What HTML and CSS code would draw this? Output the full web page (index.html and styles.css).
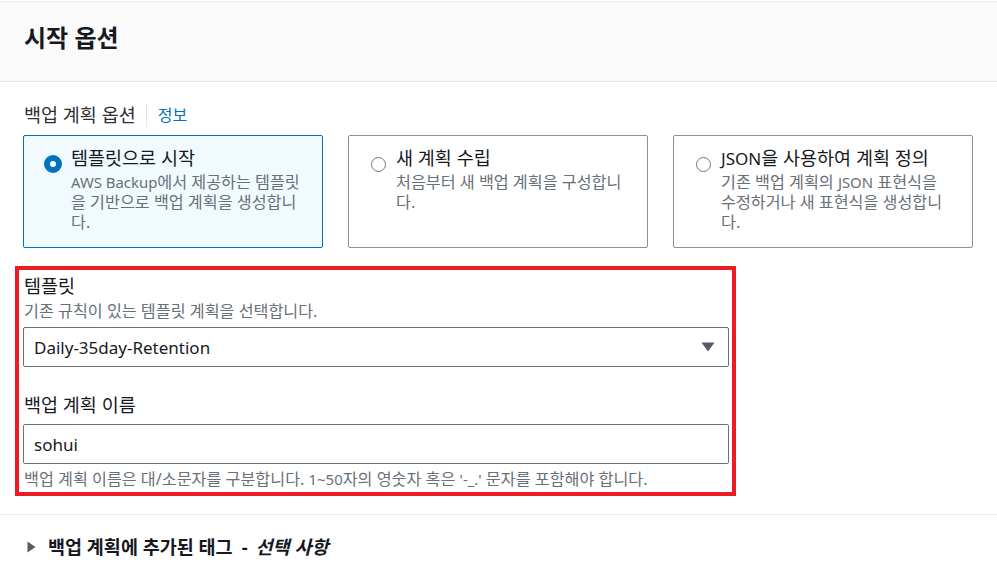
FILE: index.html
```html
<!DOCTYPE html>
<html lang="ko">
<head>
<meta charset="utf-8">
<title>시작 옵션</title>
<link rel="stylesheet" href="styles.css">
</head>
<body>
<div class="panel">
  <div class="panel-header">
    <h2 class="panel-title">시작 옵션</h2>
  </div>
  <div class="panel-body">
    <div class="group-label">
      <span>백업 계획 옵션</span>
      <span class="divider"></span>
      <a class="info-link">정보</a>
    </div>
    <div class="tiles">
      <div class="tile tile-selected">
        <span class="radio radio-checked"></span>
        <div class="tile-text">
          <div class="tile-title">템플릿으로 시작</div>
          <div class="tile-desc"><span class="lat">AWS Backup</span>에서 제공하는 템플릿을 기반으로 백업 계획을 생성합니다.</div>
        </div>
      </div>
      <div class="tile">
        <span class="radio"></span>
        <div class="tile-text">
          <div class="tile-title">새 계획 수립</div>
          <div class="tile-desc">처음부터 새 백업 계획을 구성합니다.</div>
        </div>
      </div>
      <div class="tile">
        <span class="radio"></span>
        <div class="tile-text">
          <div class="tile-title"><span class="lat">JSON</span>을 사용하여 계획 정의</div>
          <div class="tile-desc">기존 백업 계획의 <span class="lat">JSON</span> 표현식을 수정하거나 새 표현식을 생성합니다.</div>
        </div>
      </div>
    </div>
    <div class="fields">
      <div class="highlight"></div>
      <div class="field">
        <div class="field-label">템플릿</div>
        <div class="field-desc">기존 규칙이 있는 템플릿 계획을 선택합니다.</div>
        <div class="select">
          <span>Daily-35day-Retention</span>
          <svg class="caret" width="14" height="10" viewBox="0 0 14 10"><path d="M0.5 0.5 H13.5 L7 9.5 Z" fill="#545b64"/></svg>
        </div>
      </div>
      <div class="field field-name">
        <div class="field-label">백업 계획 이름</div>
        <div class="input">sohui</div>
        <div class="field-hint">백업 계획 이름은 대/소문자를 구분합니다. <span class="lat">1~50</span>자의 영숫자 혹은 <span class="lat">'-_.'</span> 문자를 포함해야 합니다.</div>
      </div>
    </div>
  </div>
  <div class="expander">
    <svg class="expander-icon" width="9" height="12" viewBox="0 0 9 12"><path d="M0.5 0.5 L8.5 6 L0.5 11.5 Z" fill="#545b64"/></svg>
    <span class="expander-title">백업 계획에 추가된 태그</span>
    <span class="expander-dash">-</span>
    <em class="expander-opt">선택 사항</em>
  </div>
</div>
</body>
</html>
```
FILE: styles.css
```css
* { box-sizing: border-box; }
html, body { margin: 0; padding: 0; background: #fff; }
body {
  font-family: "Noto Sans", "Noto Sans CJK KR", sans-serif;
  color: #16191f;
  padding-top: 1px;
}
.panel { width: 997px; }
.panel-header {
  background: #fafafa;
  border-top: 1px solid #eaeded;
  border-bottom: 1px solid #e4e6e6;
  padding: 21px 24px 28px;
}
.panel-title {
  margin: 0;
  font-size: 24px;
  line-height: 30px;
  font-weight: 700;
  color: #16191f;
}
.panel-body {
  padding: 21px 24px 25px 23px;
  border-bottom: 1px solid #eaeded;
}
.group-label {
  display: flex;
  align-items: center;
  font-size: 18.5px;
  line-height: 24px;
  color: #2b2f35;
  padding-left: 1px;
}
.divider {
  width: 1px;
  height: 23px;
  background: #e4e6e6;
  margin: 0 11px 0 10px;
}
.info-link {
  color: #0073bb;
  font-size: 16px;
}
.lat { font-size: 0.92em; line-height: 1; }
.tiles {
  display: grid;
  grid-template-columns: 300px 300px 300px;
  column-gap: 25px;
  margin-top: 8px;
}
.tile {
  display: flex;
  align-items: flex-start;
  gap: 9px;
  border: 1px solid #879196;
  border-radius: 2px;
  padding: 11px 20px 15px 20px;
  height: 113px;
}
.tile-selected {
  background: #f1faff;
  border-color: #0073bb;
}
.radio {
  flex: none;
  width: 18px;
  height: 18px;
  margin-top: 8px;
  display: flex;
  align-items: center;
  justify-content: center;
}
.radio::before {
  content: "";
  width: 15px;
  height: 15px;
  border-radius: 50%;
  border: 1.5px solid #6f7982;
  background: #fff;
  box-sizing: border-box;
}
.radio-checked::before {
  width: 18px;
  height: 18px;
  border: 6px solid #0073bb;
}
.tile-text { flex: 1; min-width: 0; }
.tile-title {
  font-size: 18.5px;
  line-height: 22px;
  color: #16191f;
}
.tile-desc {
  margin-top: 3px;
  font-size: 16.2px;
  line-height: 20px;
  color: #687078;
}
.fields {
  position: relative;
  width: 706px;
  margin-top: 26px;
}
.highlight {
  position: absolute;
  top: -8px;
  left: -8px;
  right: -7px;
  bottom: -7px;
  border: 4px solid #ec1c24;
  pointer-events: none;
}
.field-label {
  font-size: 18.5px;
  line-height: 24px;
  color: #16191f;
  padding-left: 1px;
}
.field-desc {
  margin-top: 3px;
  font-size: 16.2px;
  line-height: 20px;
  color: #687078;
  padding-left: 1px;
}
.select, .input {
  height: 40px;
  border: 1px solid #687078;
  border-radius: 2px;
  display: flex;
  align-items: center;
  padding: 0 13px 0 10px;
  font-size: 17px;
  color: #16191f;
  background: #fff;
}
.select {
  margin-top: 6px;
  justify-content: space-between;
}
.field-name { margin-top: 26px; }
.input { margin-top: 7px; }
.field-hint {
  margin-top: 5px;
  font-size: 16.2px;
  line-height: 20px;
  color: #687078;
  padding-left: 1px;
}
.expander {
  display: flex;
  align-items: center;
  padding: 20px 24px 0 27px;
  font-size: 18.5px;
  line-height: 24px;
  font-weight: 700;
  color: #16191f;
}
.expander-icon { margin-right: 12px; flex: none; }
.expander-dash { margin: 0 8px 0 9px; }
.expander-opt { font-style: italic; }
```
